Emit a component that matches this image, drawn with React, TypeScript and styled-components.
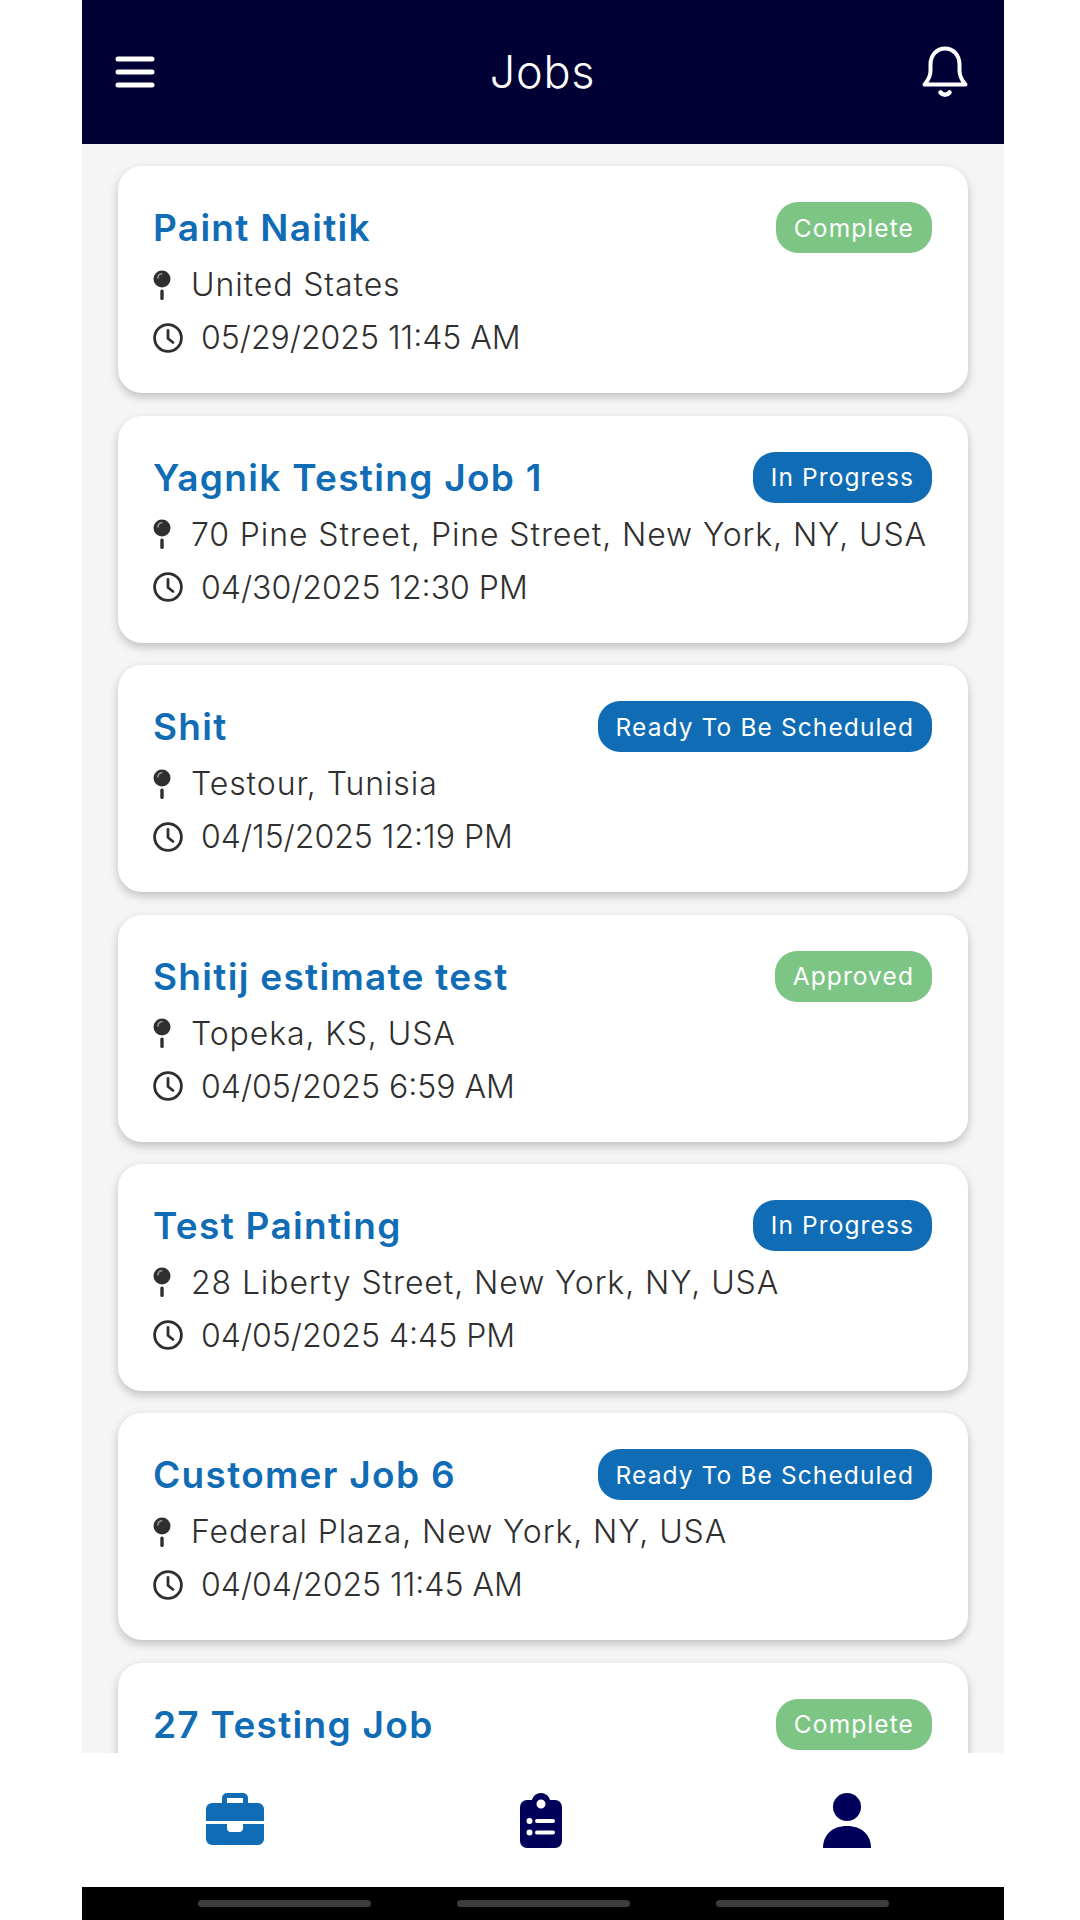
import styled, { createGlobalStyle } from 'styled-components';

const GlobalStyle = createGlobalStyle`
  html, body {
    margin: 0;
    padding: 0;
    background: #ffffff;
  }
  * {
    box-sizing: border-box;
  }
`;

const Screen = styled.div`
  width: 922px;
  height: 1920px;
  margin-left: 82px;
  display: flex;
  flex-direction: column;
  overflow: hidden;
  background: #f5f5f5;
  font-family: Inter, 'Liberation Sans', sans-serif;
`;

const Header = styled.header`
  flex: 0 0 144px;
  display: flex;
  align-items: center;
  justify-content: space-between;
  padding: 0 36px 0 33px;
  background: #000034;
`;

const HeaderTitle = styled.h1`
  margin: 0 0 1px 8px;
  font-size: 45px;
  font-weight: 300;
  letter-spacing: 0.8px;
  color: #ffffff;
`;

const JobList = styled.main`
  flex: 1;
  display: flex;
  flex-direction: column;
  gap: 22.45px;
  padding: 22.2px 36px 0;
  overflow: hidden;
`;

const Card = styled.article`
  flex: 0 0 227px;
  padding: 36px 36px 0 35px;
  border-radius: 24px;
  background: #ffffff;
  box-shadow: 0 4px 10px rgba(0, 0, 0, 0.22);
`;

const CardHead = styled.div`
  display: flex;
  align-items: center;
  justify-content: space-between;
  height: 51px;
  margin-bottom: 5px;
`;

const JobTitle = styled.h2`
  margin: 0;
  font-size: 37px;
  font-weight: 600;
  letter-spacing: 1.3px;
  color: #0f6cb5;
`;

const Badge = styled.span<{ $tone: 'green' | 'blue' }>`
  height: 51px;
  padding: 0 18px;
  display: flex;
  align-items: center;
  border-radius: 22px;
  font-size: 24.5px;
  letter-spacing: 1.1px;
  color: #ffffff;
  background: ${(p) => (p.$tone === 'green' ? '#7dc584' : '#0f6cb5')};
`;

const InfoRow = styled.div<{ $gap: number; $spacing: number }>`
  display: flex;
  align-items: center;
  gap: ${(p) => p.$gap}px;
  height: 53px;
  font-size: 32px;
  font-weight: 300;
  letter-spacing: ${(p) => p.$spacing}px;
  white-space: nowrap;
  color: #2f2f2f;
`;

const BottomNav = styled.nav`
  flex: 0 0 134px;
  display: grid;
  grid-template-columns: repeat(3, 306px);
  align-items: start;
  justify-items: center;
  padding-top: 40px;
  background: #ffffff;
  position: relative;
`;

const GestureBar = styled.div`
  flex: 0 0 33px;
  display: grid;
  grid-template-columns: repeat(3, 173px);
  justify-content: center;
  column-gap: 86px;
  padding-top: 13px;
  background: #000000;
`;

const GesturePill = styled.span`
  height: 7px;
  border-radius: 4px;
  background: #3c3c3c;
`;

const MenuIcon = () => (
  <svg width="40" height="34" viewBox="0 0 40 34" fill="none" stroke="#fff" strokeWidth="5" strokeLinecap="round">
    <path d="M3 4h34M3 17h34M3 30h34" />
  </svg>
);

const BellIcon = () => (
  <svg width="46" height="52" viewBox="0 0 46 52" fill="none" stroke="#fff" strokeWidth="4" strokeLinecap="round" strokeLinejoin="round">
    <path d="M2.500 38.500h41c-4-4.500-6-8-6-14v-6C37.500 9 31 2.500 23 2.500S8.500 9 8.500 18.500v6c0 6-2 9.500-6 14Z" />
    <path d="M18.500 46.500c2.500 3 6.500 3 9 0" strokeWidth="4.500" />
  </svg>
);

const PinIcon = () => (
  <svg width="18" height="30" viewBox="0 0 18 30">
    <circle cx="9" cy="9" r="8.500" fill="#2f2f2f" />
    <path d="M5 8c0-2.500 1.800-4 3.800-4.200" fill="none" stroke="#9a9a9a" strokeWidth="1.500" strokeLinecap="round" />
    <rect x="7.300" y="19.500" width="3.400" height="10.500" rx="1.500" fill="#2f2f2f" />
  </svg>
);

const ClockIcon = () => (
  <svg width="30" height="30" viewBox="0 0 30 30" fill="none" stroke="#2f2f2f" strokeWidth="2.800" strokeLinecap="round" strokeLinejoin="round">
    <circle cx="15" cy="15" r="13.400" />
    <path d="M15 7.500V15.500l5 4" />
  </svg>
);

const BriefcaseIcon = () => (
  <svg width="58" height="52" viewBox="0 0 58 52" fill="#0f6cb5">
    <path
      fillRule="evenodd"
      d="M21 0h16a5 5 0 0 1 5 5v5h10a6 6 0 0 1 6 6v12H0V16a6 6 0 0 1 6-6h10V5a5 5 0 0 1 5-5Zm0 5v5h16V5H21Z"
    />
    <path d="M0 31h21v4a4 4 0 0 0 4 4h8a4 4 0 0 0 4-4v-4h21v15a6 6 0 0 1-6 6H6a6 6 0 0 1-6-6V31Z" />
  </svg>
);

const ClipboardIcon = () => (
  <svg width="42" height="55" viewBox="0 0 42 55" fill="#00005a">
    <path
      fillRule="evenodd"
      d="M21 0c4.500 0 8 3 9 7h5a7 7 0 0 1 7 7v34a7 7 0 0 1-7 7H7a7 7 0 0 1-7-7V14a7 7 0 0 1 7-7h5c1-4 4.500-7 9-7Zm0 6.500a4.500 4.500 0 1 0 0 9 4.500 4.500 0 0 0 0-9ZM9.500 25a3 3 0 1 0 0 6 3 3 0 0 0 0-6Zm0 11.500a3 3 0 1 0 0 6 3 3 0 0 0 0-6ZM17 26a2 2 0 0 0 0 4h16a2 2 0 0 0 0-4H17Zm0 11.500a2 2 0 0 0 0 4h16a2 2 0 0 0 0-4H17Z"
    />
  </svg>
);

const PersonIcon = () => (
  <svg width="48" height="55" viewBox="0 0 48 55" fill="#00005a">
    <circle cx="24" cy="14" r="14" />
    <path d="M0 55c0-13 9-22 24-22s24 9 24 22H0Z" />
  </svg>
);

interface Job {
  title: string;
  status: string;
  tone: 'green' | 'blue';
  place: string;
  date: string;
}

const jobs: Job[] = [
  { title: 'Paint Naitik', status: 'Complete', tone: 'green', place: 'United States', date: '05/29/2025 11:45 AM' },
  {
    title: 'Yagnik Testing Job 1',
    status: 'In Progress',
    tone: 'blue',
    place: '70 Pine Street, Pine Street, New York, NY, USA',
    date: '04/30/2025 12:30 PM'
  },
  { title: 'Shit', status: 'Ready To Be Scheduled', tone: 'blue', place: 'Testour, Tunisia', date: '04/15/2025 12:19 PM' },
  { title: 'Shitij estimate test', status: 'Approved', tone: 'green', place: 'Topeka, KS, USA', date: '04/05/2025 6:59 AM' },
  {
    title: 'Test Painting',
    status: 'In Progress',
    tone: 'blue',
    place: '28 Liberty Street, New York, NY, USA',
    date: '04/05/2025 4:45 PM'
  },
  {
    title: 'Customer Job 6',
    status: 'Ready To Be Scheduled',
    tone: 'blue',
    place: 'Federal Plaza, New York, NY, USA',
    date: '04/04/2025 11:45 AM'
  },
  { title: '27 Testing Job', status: 'Complete', tone: 'green', place: '', date: '' }
];

export default function App() {
  return (
    <>
      <GlobalStyle />
      <Screen>
        <Header>
          <MenuIcon />
          <HeaderTitle>Jobs</HeaderTitle>
          <BellIcon />
        </Header>
        <JobList>
          {jobs.map((job) => (
            <Card key={job.title}>
              <CardHead>
                <JobTitle>{job.title}</JobTitle>
                <Badge $tone={job.tone}>{job.status}</Badge>
              </CardHead>
              <InfoRow $gap={20} $spacing={0.9}>
                <PinIcon />
                {job.place}
              </InfoRow>
              <InfoRow $gap={18} $spacing={0}>
                <ClockIcon />
                {job.date}
              </InfoRow>
            </Card>
          ))}
        </JobList>
        <BottomNav>
          <BriefcaseIcon />
          <ClipboardIcon />
          <PersonIcon />
        </BottomNav>
        <GestureBar>
          <GesturePill />
          <GesturePill />
          <GesturePill />
        </GestureBar>
      </Screen>
    </>
  );
}
